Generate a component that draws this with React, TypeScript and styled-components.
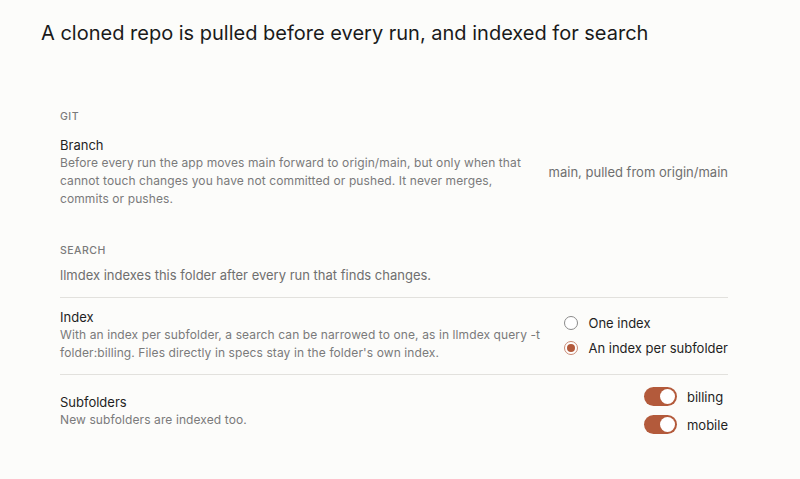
import React, { useState } from "react";
import styled, { createGlobalStyle } from "styled-components";

const Global = createGlobalStyle`
  html, body { margin: 0; padding: 0; background: #fcfcfa; }
  body { font-family: Inter, "Liberation Sans", Arial, sans-serif; color: #1f1f1f; -webkit-font-smoothing: antialiased; }
`;

const ACCENT = "#b35a3b";

const Page = styled.div`
  width: 800px;
  height: 479px;
  box-sizing: border-box;
  padding: 20px 72px 0 41px;
  background: #fcfcfa;
`;

const Heading = styled.h1`
  margin: 0;
  font-size: 20px;
  font-weight: 400;
  line-height: 26px;
  color: #1a1a1a;
`;

const Panel = styled.div`
  margin: 64px 0 0 19px;
  display: flex;
  flex-direction: column;
`;

const SectionLabel = styled.div<{ $top?: number }>`
  font-size: 10.5px;
  font-weight: 500;
  letter-spacing: 0.5px;
  color: #7a7a7a;
  line-height: 14px;
  margin-top: ${(p) => p.$top ?? 0}px;
`;

const Row = styled.div<{ $divider?: boolean; $top?: number; $bottom?: number }>`
  display: flex;
  align-items: center;
  justify-content: space-between;
  gap: 20px;
  padding: ${(p) => p.$top ?? 11}px 0 ${(p) => p.$bottom ?? 11}px;
  border-top: ${(p) => (p.$divider ? "1px solid #e2e1dd" : "none")};
`;

const Info = styled.div`
  display: flex;
  flex-direction: column;
  max-width: 486px;
  min-width: 0;
`;

const Title = styled.div`
  font-size: 13px;
  line-height: 18px;
  color: #1f1f1f;
`;

const Desc = styled.div`
  font-size: 12px;
  line-height: 18px;
  letter-spacing: 0.1px;
  color: #7a7a7a;
`;

const Value = styled.div`
  font-size: 13px;
  color: #6f6f6f;
  white-space: nowrap;
  flex: none;
`;

const Intro = styled.div`
  font-size: 13px;
  color: #6f6f6f;
  line-height: 18px;
  padding: 8px 0 13px;
`;

const Options = styled.div<{ $gap: number }>`
  display: flex;
  flex-direction: column;
  gap: ${(p) => p.$gap}px;
  flex: none;
`;

const RadioLabel = styled.label`
  display: flex;
  align-items: center;
  gap: 10px;
  font-size: 13px;
  line-height: 18px;
  color: #1f1f1f;
  white-space: nowrap;
  cursor: pointer;
`;

const RadioDot = styled.span<{ $on: boolean }>`
  width: 14px;
  height: 14px;
  box-sizing: border-box;
  border-radius: 50%;
  border: 1px solid ${(p) => (p.$on ? "#c98a74" : "#8a8a8a")};
  display: flex;
  align-items: center;
  justify-content: center;
  background: #fff;
  flex: none;
  &::after {
    content: "";
    width: 8px;
    height: 8px;
    border-radius: 50%;
    background: ${(p) => (p.$on ? ACCENT : "transparent")};
  }
`;

const ToggleLabel = styled.label`
  display: flex;
  align-items: center;
  gap: 10px;
  font-size: 13px;
  color: #1f1f1f;
  white-space: nowrap;
  cursor: pointer;
`;

const Switch = styled.span<{ $on: boolean }>`
  width: 33px;
  height: 19px;
  border-radius: 10px;
  background: ${(p) => (p.$on ? ACCENT : "#cfcfcf")};
  position: relative;
  flex: none;
  &::after {
    content: "";
    position: absolute;
    top: 2px;
    left: ${(p) => (p.$on ? 16 : 2)}px;
    width: 15px;
    height: 15px;
    border-radius: 50%;
    background: #fff;
  }
`;

export default function App() {
  const [mode, setMode] = useState("per");
  const [subs, setSubs] = useState({ billing: true, mobile: true });
  return (
    <Page>
      <Global />
      <Heading>A cloned repo is pulled before every run, and indexed for search</Heading>
      <Panel>
        <SectionLabel>GIT</SectionLabel>
        <Row $top={12} $bottom={12}>
          <Info>
            <Title>Branch</Title>
            <Desc>
              Before every run the app moves main forward to origin/main, but only when that cannot touch
              changes you have not committed or pushed. It never merges, commits or pushes.
            </Desc>
          </Info>
          <Value>main, pulled from origin/main</Value>
        </Row>
        <SectionLabel $top={24}>SEARCH</SectionLabel>
        <Intro>llmdex indexes this folder after every run that finds changes.</Intro>
        <Row $divider $top={10} $bottom={12}>
          <Info>
            <Title>Index</Title>
            <Desc>
              With an index per subfolder, a search can be narrowed to one, as in llmdex query -t
              folder:billing. Files directly in specs stay in the folder's own index.
            </Desc>
          </Info>
          <Options $gap={7}>
            <RadioLabel onClick={() => setMode("one")}>
              <RadioDot $on={mode === "one"} />
              One index
            </RadioLabel>
            <RadioLabel onClick={() => setMode("per")}>
              <RadioDot $on={mode === "per"} />
              An index per subfolder
            </RadioLabel>
          </Options>
        </Row>
        <Row $divider $top={12} $bottom={12}>
          <Info>
            <Title>Subfolders</Title>
            <Desc>New subfolders are indexed too.</Desc>
          </Info>
          <Options $gap={9}>
            {(["billing", "mobile"] as const).map((k) => (
              <ToggleLabel key={k} onClick={() => setSubs({ ...subs, [k]: !subs[k] })}>
                <Switch $on={subs[k]} />
                {k}
              </ToggleLabel>
            ))}
          </Options>
        </Row>
      </Panel>
    </Page>
  );
}
